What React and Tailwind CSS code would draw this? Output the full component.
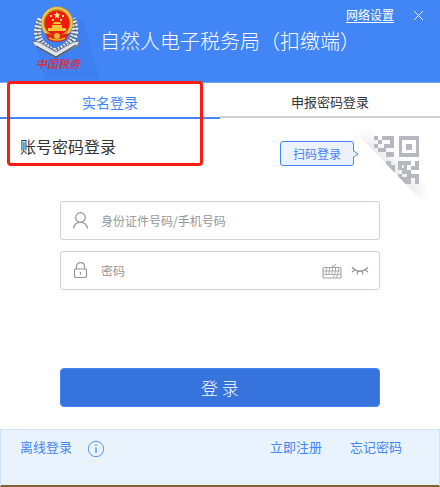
import React, { useState } from "react";

const Emblem = () => (
  <svg viewBox="0 0 68 74" className="h-[74px] w-[68px]" aria-hidden="true">
    <path d="M4 34L12 73H68L50 12Z" fill="#3f80f0" />
    {/* laurel wreath */}
    <path d="M9 13Q-2 36 23 46Q50 36 40 13" fill="none" stroke="#56698c" strokeWidth="7" />
    <path d="M9 13Q-2 36 23 46Q50 36 40 13" fill="none" stroke="#e9eef5" strokeWidth="7" strokeDasharray="2 1.5" />
    <path d="M7 16Q0 35 23 44Q48 35 42 16" fill="none" stroke="#6d7f9e" strokeWidth="1" strokeDasharray="3 2" />
    <path d="M0 35L7 36L24 46L41 36L48 35L45 40L25 51L22 51L3 40Z" fill="#dfe4ea" stroke="#5a6473" strokeWidth="0.8" />
    <path d="M4 40L24 51L44 39" fill="none" stroke="#4c5665" strokeWidth="1.4" />
    {/* national emblem */}
    <ellipse cx="25" cy="17" rx="16" ry="16.500" fill="#c99b2d" />
    <ellipse cx="25" cy="17" rx="14.500" ry="15" fill="none" stroke="#f0d35a" strokeWidth="1.500" />
    <circle cx="25" cy="17" r="12.500" fill="#ee1c0e" />
    <path d="M25 5.500L26 8L28.600 8.200L26.600 9.800L27.300 12.400L25 11L22.700 12.400L23.400 9.800L21.400 8.200L24 8Z" fill="#ffe9a0" />
    <path d="M18 9h2v2h-2zM30 9h2v2h-2zM20 13h2v2h-2zM28 13h2v2h-2z" fill="#ffd23f" />
    <path d="M21 18L22 16H28L29 18ZM20 19H30V22H20ZM16 22H34V25H16Z" fill="#f5c52f" />
    <path d="M13 27Q25 31 37 27L34 34Q25 38 16 34Z" fill="#dd2614" />
    <path d="M17 32Q25 36 33 32" fill="none" stroke="#e8b72f" strokeWidth="1.500" />
    <circle cx="25" cy="30" r="3" fill="#e6b52d" />
    <text x="4" y="62" fontSize="11" fontStyle="italic" fontWeight="500" fill="#df2b35">
      中国税务
    </text>
  </svg>
);

const QrCorner = () => (
  <svg viewBox="0 0 68 70" className="h-[70px] w-[68px]" aria-hidden="true">
    <defs>
      <linearGradient id="fold" gradientUnits="userSpaceOnUse" x1="32" y1="36" x2="42" y2="26">
        <stop offset="0" stopColor="#ececed" />
        <stop offset="1" stopColor="#ffffff" />
      </linearGradient>
      <linearGradient id="fade" gradientUnits="userSpaceOnUse" x1="0" y1="0" x2="68" y2="70">
        <stop offset="0" stopColor="#ffffff" />
        <stop offset="0.200" stopColor="#ffffff" stopOpacity="0" />
        <stop offset="0.820" stopColor="#ffffff" stopOpacity="0" />
        <stop offset="1" stopColor="#ffffff" />
      </linearGradient>
      <clipPath id="peel">
        <path d="M0 0H68V75L0 5Z" />
      </clipPath>
    </defs>
    <g clipPath="url(#peel)">
      <path d="M0 0H68V75L0 5Z" fill="url(#fold)" />
      <path d="M0 0H68V75L0 5Z" fill="url(#fade)" />
      <g fill="#b7b8bf">
        <path d="M16 6h4v4h-4zM24 6h12v12h-4v-8h-8zM20 10h4v4h-4zM16 14h4v4h-4zM26 14h6v4h-6zM20 18h8v4h-8zM28 22h8v5h-8z" />
        <path d="M41 6h20v21h-20zM44 10v13h14v-13z" fillRule="evenodd" />
        <path d="M48 14h6v6h-6z" />
        <path d="M28 31h5v4h4v7h-9z" />
        <path d="M40 31h13v4h-4v5h4v4h4v-4h-4v-4h4v-5h4v9h-4v4h4v10h-4v-6h-4v6h-13v-10h4v-4h-4z" />
      </g>
      <path d="M44 35h2v3h-2zM44 44h5v3h-5z" fill="#f1f1f3" />
    </g>
  </svg>
);

const UserIcon = () => (
  <svg viewBox="0 0 18 18" className="h-[18px] w-[18px] shrink-0" fill="none" stroke="#969696" strokeWidth="1.200" aria-hidden="true">
    <circle cx="8.500" cy="5.500" r="4.800" />
    <path d="M1.500 16.500C2 12.500 4.500 10.300 8.500 10.300S15 12.500 15.500 16.500" />
  </svg>
);

const LockIcon = () => (
  <svg viewBox="0 0 18 18" className="h-[18px] w-[18px] shrink-0" fill="none" stroke="#969696" strokeWidth="1.200" aria-hidden="true">
    <rect x="2.500" y="7" width="12" height="8.500" rx="1" />
    <path d="M4.500 7V4.500C4.500 2 6 0.700 8.500 0.700S12.500 2 12.500 4.500V7M8.500 10V12.500" />
  </svg>
);

const KeyboardIcon = () => (
  <svg viewBox="0 0 20 16" className="h-4 w-5" fill="none" stroke="#a5a5a5" aria-hidden="true">
    <rect x="1" y="4.500" width="18" height="10.500" rx="1" strokeWidth="1.200" />
    <path d="M10 4.500L11 2.500L12 3.500L14 1M2 8H18M2 11.500H18M4.500 5V8M7.500 5V8M10.500 5V8M13.500 5V8M16.500 5V8M4 8V11M7 8V11M10 8V11M13 8V11M16 8V11M12 12V15M15 12V15" strokeWidth="0.900" />
  </svg>
);

const EyeClosedIcon = () => (
  <svg viewBox="0 0 18 10" className="h-[10px] w-[18px]" fill="none" stroke="#969696" strokeWidth="1.200" aria-hidden="true">
    <path d="M1 1.500Q9 9 17 1.500M3.500 4L1 6M14.500 4L17 6M7 5.500L6 8.500M11 5.500L12 8.500" />
  </svg>
);

const App = () => {
  const [account, setAccount] = useState("");
  const [password, setPassword] = useState("");
  const [visible, setVisible] = useState(false);

  return (
    <div className="relative flex min-h-screen flex-col bg-white font-['Noto_Sans_CJK_SC',sans-serif] text-[#333333]">
      <header className="flex h-[83px] border-b border-[#6aa9ee] bg-[#4285f6] pt-1.5 pl-8 text-white">
        <Emblem />
        <h1 className="mt-5 flex-1 text-xl leading-[30px] font-light whitespace-nowrap">
          自然人电子税务局（扣缴端）
        </h1>
        <div className="absolute top-[5px] right-4 flex items-center gap-[19px]">
          <a href="#network" className="text-xs leading-5 underline underline-offset-2">网络设置</a>
          <button type="button" aria-label="关闭" className="cursor-pointer">
            <svg viewBox="0 0 11 11" className="h-[11px] w-[11px]" stroke="#ffffff" aria-hidden="true">
              <path d="M1 1L10 10M10 1L1 10" />
            </svg>
          </button>
        </div>
      </header>

      <nav className="grid grid-cols-2">
        <button type="button" className="h-9 cursor-pointer border-b-2 border-[#4285f6] pt-1 text-sm text-[#4285f6]">
          实名登录
        </button>
        <button type="button" className="h-[35px] cursor-pointer border-b-2 border-[#d0d0d4] pt-1 text-[13px]">
          申报密码登录
        </button>
      </nav>

      <main className="flex flex-1 flex-col">
        <div className="flex h-[82px] items-start pt-[11px] pr-[14px] pl-5">
          <h2 className="mt-1 flex-1 text-base leading-6">账号密码登录</h2>
          <button
            type="button"
            className="relative mt-[11px] h-[25px] w-[74px] cursor-pointer rounded-[3px] border border-[#4285f6] bg-[#ebf2fd] text-xs text-[#4285f6]"
          >
            扫码登录
            <svg viewBox="0 0 6 8" className="absolute top-2 -right-[6px] h-2 w-1.5" fill="#ebf2fd" stroke="#4285f6" aria-hidden="true">
              <path d="M0 0.500L5 4L0 7.500" />
            </svg>
          </button>
          <div className="ml-1">
            <QrCorner />
          </div>
        </div>

        <form className="flex flex-col px-[60px]" onSubmit={(e) => e.preventDefault()}>
          <label className="flex h-[39px] items-center gap-[11px] rounded-[3px] border border-[#cfcfd6] px-[11px]">
            <UserIcon />
            <input
              type="text"
              aria-label="身份证件号码/手机号码"
              placeholder="身份证件号码/手机号码"
              value={account}
              onChange={(e) => setAccount(e.target.value)}
              className="min-w-0 flex-1 text-xs outline-none placeholder:text-[#969696]"
            />
          </label>
          <div className="mt-[11px] flex h-[39px] items-center gap-[9px] rounded-[3px] border border-[#cfcfd6] pr-[10px] pl-[11px]">
            <LockIcon />
            <input
              type={visible ? "text" : "password"}
              aria-label="密码"
              placeholder="密码"
              value={password}
              onChange={(e) => setPassword(e.target.value)}
              className="ml-0.5 min-w-0 flex-1 text-xs outline-none placeholder:text-[#969696]"
            />
            <button type="button" aria-label="软键盘" className="cursor-pointer">
              <KeyboardIcon />
            </button>
            <button type="button" aria-label="显示密码" className="cursor-pointer" onClick={() => setVisible(!visible)}>
              <EyeClosedIcon />
            </button>
          </div>
          <button
            type="submit"
            className="mt-[78px] mb-[22px] h-[39px] cursor-pointer rounded-[4px] border border-[#4285f6] bg-[#3673dc] text-[17px] font-light text-white"
          >
            登 录
          </button>
        </form>
      </main>

      <footer className="flex h-[58px] items-start border border-b-2 border-[#cde3fa] border-b-[#80622f] bg-[#e8f3fe] pt-[7px] pr-[37px] pl-[19px] text-[13px] leading-5 text-[#4285f6]">
        <a href="#offline">离线登录</a>
        <button type="button" aria-label="说明" className="mt-[3px] ml-[15px] cursor-pointer">
          <svg viewBox="0 0 18 18" className="h-[18px] w-[18px]" fill="none" stroke="#5b96f7" aria-hidden="true">
            <circle cx="9" cy="9" r="7.700" />
            <path d="M9 7.500V13M9 4.500V6" strokeWidth="1.500" />
          </svg>
        </button>
        <a href="#register" className="ml-auto">立即注册</a>
        <a href="#forgot" className="ml-7">忘记密码</a>
      </footer>

      {/* highlight around the selected login mode */}
      <div className="pointer-events-none absolute top-[81px] left-[7px] h-[85px] w-[196px] rounded-[4px] border-3 border-[#ff1a12]" />
    </div>
  );
};

export default App;
